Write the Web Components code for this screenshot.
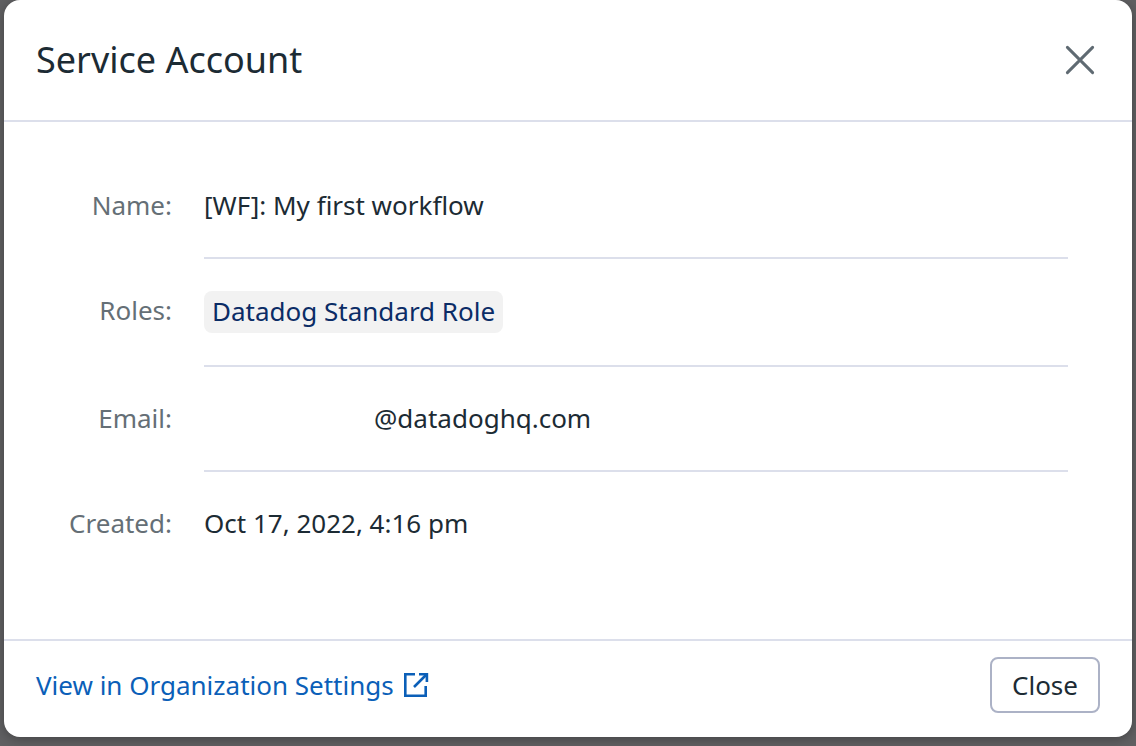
<!DOCTYPE html>
<html lang="en">
<head>
<meta charset="utf-8">
<title>Service Account</title>
<style>
  body {
    margin: 0;
    min-height: 100vh;
    background: #606062;
    font: 26px/39px "Noto Sans", sans-serif;
    color: #1c2b34;
  }
</style>
</head>
<body>
<account-dialog>
  <span slot="title">Service Account</span>
  <detail-row label="Name:">[WF]: My first workflow</detail-row>
  <detail-row label="Roles:"><role-chip>Datadog Standard Role</role-chip></detail-row>
  <detail-row label="Email:"><masked-email>@datadoghq.com</masked-email></detail-row>
  <detail-row label="Created:">Oct 17, 2022, 4:16 pm</detail-row>
  <external-link slot="footer" href="#organization-settings">View in Organization Settings</external-link>
  <outline-button slot="footer">Close</outline-button>
</account-dialog>

<script>
  function define(name, html, setup) {
    const template = document.createElement('template');
    template.innerHTML = html;
    customElements.define(name, class extends HTMLElement {
      constructor() {
        super();
        this.attachShadow({ mode: 'open' }).append(template.content.cloneNode(true));
      }
      connectedCallback() {
        if (setup) setup(this, this.shadowRoot);
      }
    });
  }

  define('account-dialog', `
    <style>
      :host { display: block; padding: 0 4px 9px; }
      section { background: #fff; border-radius: 16px; box-shadow: 0 2px 12px rgba(0, 0, 0, .3); }
      header {
        display: flex; align-items: center; justify-content: space-between;
        padding: 32px; border-bottom: 2px solid #dcdfeb;
      }
      h1 { margin: 0; font-size: 36px; line-height: 56px; font-weight: 400; }
      button { display: flex; padding: 4px; border: 0; background: none; color: #5f6a72; cursor: pointer; }
      main { padding: 32px 64px 64px; }
      footer {
        display: flex; align-items: center; justify-content: space-between;
        padding: 16px 32px 24px; border-top: 2px solid #dcdfeb;
      }
    </style>
    <section role="dialog" aria-labelledby="title">
      <header>
        <h1 id="title"><slot name="title"></slot></h1>
        <button type="button" aria-label="Close dialog">
          <svg width="32" height="32" viewBox="0 0 32 32" fill="none" stroke="currentColor" stroke-width="3" stroke-linecap="round">
            <path d="M3.4 3.4 28.6 28.6M28.6 3.4 3.4 28.6"/>
          </svg>
        </button>
      </header>
      <main><slot></slot></main>
      <footer><slot name="footer"></slot></footer>
    </section>`);

  define('detail-row', `
    <style>
      :host { display: grid; grid-template-columns: 104px 1fr; column-gap: 32px; }
      .label { padding: 32px 0; text-align: right; color: #656f76; }
      .value { padding: 32px 0; border-bottom: 2px solid #dcdfeb; }
      :host(:last-of-type) .value { border-bottom: 0; }
    </style>
    <div class="label" id="label"></div>
    <div class="value" aria-labelledby="label"><slot></slot></div>`,
    (host, root) => { root.querySelector('.label').textContent = host.getAttribute('label'); });

  define('role-chip', `
    <style>
      :host { display: block; width: fit-content; padding: 0 8px 2px; border-radius: 8px; background: #f2f2f2; color: #0b2c66; line-height: 40px; }
    </style>
    <slot></slot>`);

  define('masked-email', `
    <style>
      :host { display: block; padding-left: 170px; }
    </style>
    <slot></slot>`);

  define('external-link', `
    <style>
      :host { display: block; }
      a { display: flex; align-items: center; gap: 8px; color: #0b5fb8; text-decoration: none; }
    </style>
    <a><slot></slot>
      <svg width="28" height="28" viewBox="0 0 28 28" fill="none" stroke="currentColor" stroke-width="2.6" aria-hidden="true">
        <path d="M13 3.3H3.3V24.7H23.7V15M12 16 24 4"/>
        <path d="M17 3.3H24.9V11"/>
      </svg>
    </a>`,
    (host, root) => { root.querySelector('a').href = host.getAttribute('href'); });

  define('outline-button', `
    <style>
      :host { display: block; }
      button {
        display: block; box-sizing: border-box; height: 56px; padding: 0 20px;
        border: 2px solid #acb2c6; border-radius: 8px; background: #fff;
        color: inherit; font: inherit; cursor: pointer;
      }
    </style>
    <button type="button"><slot></slot></button>`);
</script>
</body>
</html>
